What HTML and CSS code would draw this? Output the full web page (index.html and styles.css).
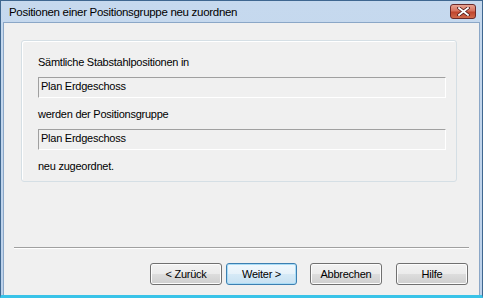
FILE: index.html
```html
<!DOCTYPE html>
<html lang="de">
<head>
    <meta charset="UTF-8">
    <title>Positionen einer Positionsgruppe neu zuordnen</title>
    <link rel="stylesheet" href="styles.css">
</head>
<body>
    <div class="window">
        <div class="titlebar">
            <span class="title">Positionen einer Positionsgruppe neu zuordnen</span>
            <div class="close-btn">
                <svg width="13" height="9" viewBox="0 0 13 9">
                    <path d="M2 1 L11 8 M11 1 L2 8" stroke="#4a1616" stroke-width="3.4" stroke-linecap="square"/>
                    <path d="M2 1 L11 8 M11 1 L2 8" stroke="#ffffff" stroke-width="1.8" stroke-linecap="square"/>
                </svg>
            </div>
        </div>

        <div class="client">
            <div class="group">
                <div class="label first">Sämtliche Stabstahlpositionen in</div>
                <div class="field">Plan Erdgeschoss</div>
                <div class="label">werden der Positionsgruppe</div>
                <div class="field">Plan Erdgeschoss</div>
                <div class="label">neu zugeordnet.</div>
            </div>

            <div class="separator"></div>

            <div class="buttons">
                <button class="btn">&lt; Zurück</button>
                <button class="btn default">Weiter &gt;</button>
                <button class="btn cancel">Abbrechen</button>
                <button class="btn help">Hilfe</button>
            </div>
        </div>
    </div>
</body>
</html>
```

FILE: styles.css
```css
html, body {
    margin: 0;
    padding: 0;
    background: #f0f0f0;
}
body {
    font-family: "Liberation Sans", Arial, sans-serif;
    font-size: 11px;
    letter-spacing: -0.25px;
    color: #000;
}
.window {
    width: 483px;
    height: 298px;
    box-sizing: border-box;
    border: 1px solid #3f6790;
    border-bottom: 3px solid #39c3e8;
    background: linear-gradient(#c6d9ee, #bcd1ea);
    padding: 0 2px 0 2px;
    display: flex;
    flex-direction: column;
}
.titlebar {
    height: 21px;
    display: flex;
    align-items: center;
    justify-content: space-between;
    padding: 0 4px 0 6px;
}
.title {
    color: #000;
    font-size: 11.5px;
    letter-spacing: -0.3px;
}
.close-btn {
    width: 24px;
    height: 13px;
    margin-top: -1px;
    border: 1px solid #6b2a2a;
    border-radius: 3px;
    background: linear-gradient(#e8a493 0%, #d7735f 45%, #c0452e 55%, #d06a4c 100%);
    display: flex;
    align-items: center;
    justify-content: center;
}
.client {
    flex: 1;
    background: #f0f0f0;
    border: 1px solid #8ba7c7;
    border-bottom: none;
    display: flex;
    flex-direction: column;
}
.group {
    margin: 17px 0 0 17px;
    width: 436px;
    height: 142px;
    box-sizing: border-box;
    border: 1px solid #d5dfe5;
    border-radius: 3px;
    box-shadow: inset 1px 1px 0 #fff;
    padding: 0 0 0 16px;
}
.label {
    height: 14px;
    line-height: 14px;
    margin-top: 9px;
}
.label.first {
    margin-top: 14px;
}
.field {
    width: 408px;
    height: 21px;
    box-sizing: border-box;
    margin-top: 8px;
    border-top: 1px solid #a0a0a0;
    border-left: 1px solid #a0a0a0;
    border-right: 1px solid #fff;
    border-bottom: 1px solid #fff;
    padding: 1px 0 0 2px;
    line-height: 14px;
}
.separator {
    margin: 65px 10px 0 10px;
    height: 1px;
    background: #a0a0a0;
    border-bottom: 1px solid #fff;
}
.buttons {
    display: flex;
    justify-content: flex-end;
    gap: 4px;
    margin: 14px 11px 0 0;
}
.btn {
    width: 72px;
    height: 22px;
    padding: 0;
    font-family: "Liberation Sans", Arial, sans-serif;
    font-size: 11px;
    letter-spacing: -0.25px;
    color: #000;
    border: 1px solid #707070;
    border-radius: 3px;
    background: linear-gradient(#f2f2f2 0%, #ebebeb 50%, #dddddd 50%, #cfcfcf 100%);
    box-shadow: inset 0 0 0 1px #fcfcfc;
}
.btn.default {
    width: 71px;
    border-color: #3c7fb1;
    background: linear-gradient(#f1f8fd 0%, #e6f2fa 50%, #d6eaf7 50%, #c8e1f2 100%);
    box-shadow: inset 0 0 0 1px #a9dcf6;
}
.btn.cancel {
    margin-left: 9px;
}
.btn.help {
    margin-left: 10px;
}
```
